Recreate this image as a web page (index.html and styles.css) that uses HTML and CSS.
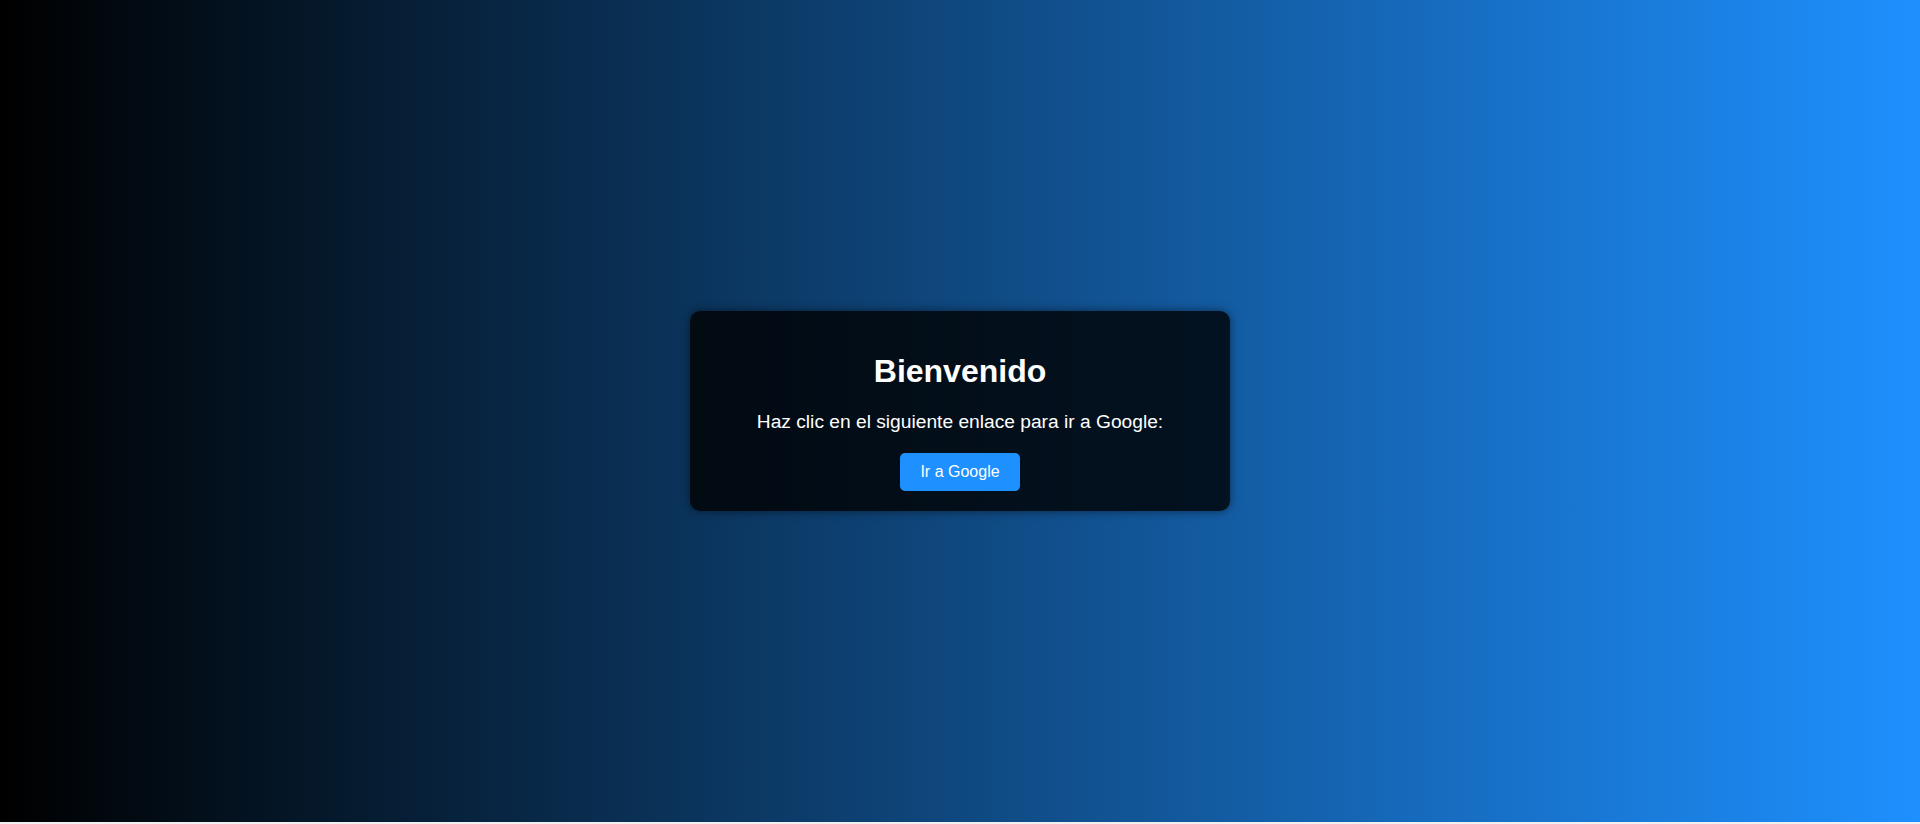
FILE: index.html
```html
<!DOCTYPE html>
<html lang="es">
<head>
<meta charset="utf-8">
<title>Bienvenido</title>
<link rel="stylesheet" href="styles.css">
</head>
<body>
<main class="page">
  <section class="card">
    <h1 class="title">Bienvenido</h1>
    <p class="lead">Haz clic en el siguiente enlace para ir a Google:</p>
    <div class="actions">
      <a class="btn" href="#">Ir a Google</a>
    </div>
  </section>
</main>
</body>
</html>
```

FILE: styles.css
```css
html {
  background: #f0f0f0;
}
body {
  margin: 0;
  font-family: "Liberation Sans", Arial, sans-serif;
  color: #ffffff;
}
.page {
  height: calc(100vh - 2px);
  background: linear-gradient(to right, #000000, #1e90ff);
  display: flex;
  align-items: center;
  justify-content: center;
}
.card {
  box-sizing: border-box;
  width: 540px;
  padding: 20px;
  background: rgba(0, 0, 0, 0.8);
  border-radius: 10px;
  box-shadow: 0 0 10px rgba(0, 0, 0, 0.5);
  text-align: center;
}
.title {
  font-size: 32px;
  font-weight: bold;
  margin: 21.44px 0;
}
.lead {
  font-size: 19.2px;
  margin: 19.2px 0;
}
.actions {
  display: flex;
  justify-content: center;
}
.btn {
  display: inline-block;
  padding: 10px 20px;
  background: #1e90ff;
  color: #ffffff;
  text-decoration: none;
  font-size: 16px;
  border-radius: 5px;
}
```
